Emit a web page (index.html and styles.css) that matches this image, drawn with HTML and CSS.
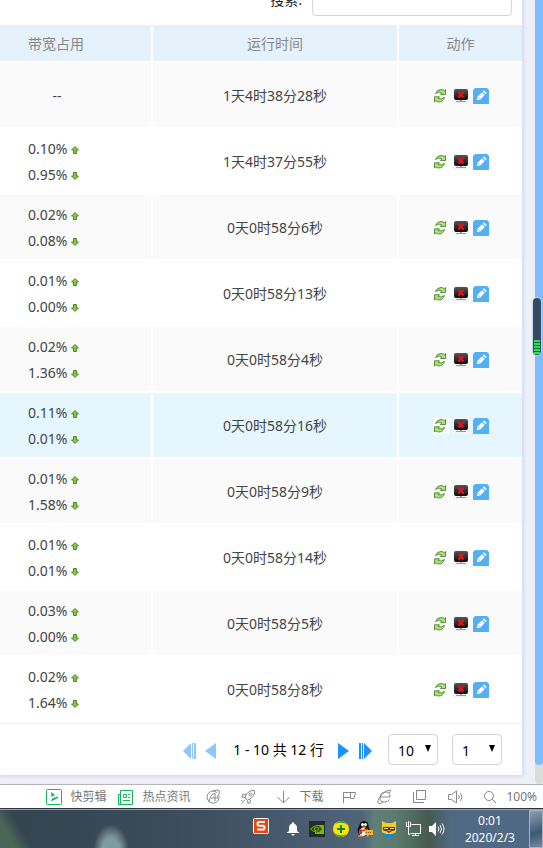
FILE: index.html
```html
<!DOCTYPE html>
<html lang="zh-CN">
  <head>
    <meta charset="utf-8" />
    <title>终端列表</title>
    <link rel="stylesheet" href="styles.css">
  </head>
  <body>
    <!-- 图标 -->
    <svg class="sprite" aria-hidden="true">
      <defs>
        <linearGradient id="screen" x1="0" y1="0" x2="0" y2="1">
          <stop offset="0" stop-color="#555" />
          <stop offset="1" stop-color="#0c0c0c" />
        </linearGradient>
        <symbol id="up" viewBox="0 0 8 8">
          <path d="M4 .5L7.5 4H5.5V7.5H2.5V4H.5Z" fill="#8cc63f" stroke="#4f8a2c" />
        </symbol>
        <symbol id="down" viewBox="0 0 8 8">
          <path d="M4 7.5L.5 4H2.5V.5H5.5V4H7.5Z" fill="#8cc63f" stroke="#4f8a2c" />
        </symbol>
        <symbol id="refresh" viewBox="0 0 16 16">
          <path d="M0 0H16V16H0Z" fill="#fff" />
          <path d="M2.500 5.500Q4 1.500 8 1.500Q10 1.500 11.200 2.700L12.500 1.500V6.500H7.500L9 5Q6 3 2.500 5.500Z" fill="#a9e57a" stroke="#4a8428" stroke-width=".9" />
          <path d="M11.500 9.500Q10 14 6 14Q4.500 14 3 12.800L1.500 14V8.800H6.500L5 10.500Q8 12 11.500 9.500Z" fill="#a9e57a" stroke="#4a8428" stroke-width=".9" />
        </symbol>
        <symbol id="offline" viewBox="0 0 16 16">
          <path d="M0 0H16V16H0Z" fill="#f5f5f5" />
          <rect x="1" y="1" width="14" height="11" rx="2" fill="url(#screen)" />
          <path d="M7 12H9V13H7ZM3 13H13V14H3Z" fill="#999" />
          <path d="M5.500 4L10.500 9.500M10.500 4L5.500 9.500" stroke="#e0131d" stroke-width="2.400" />
        </symbol>
        <symbol id="edit" viewBox="0 0 16 16">
          <path d="M2 0H14L16 2V16H0V2Z" fill="#53b0f5" />
          <path d="M4 12L4.500 8.800L9 4.300L11.700 7L7.200 11.500Z" fill="#fff" />
          <path d="M9.800 3.500L11 2.300L13.700 5L12.500 6.200Z" fill="#fff" />
          <path d="M5.500 9.500L6.500 10.500" stroke="#53b0f5" />
        </symbol>
      </defs>
    </svg>

    <main class="page">
      <section class="panel">
        <div class="search">
          <label for="keyword">搜索:</label>
          <input type="text" id="keyword">
        </div>

        <table class="list">
          <thead>
            <tr>
              <th class="col-rate">带宽占用</th>
              <th>运行时间</th>
              <th class="col-action">动作</th>
            </tr>
          </thead>
          <tbody>
            <tr>
              <td class="col-rate"><div class="rate empty">--</div></td>
              <td>1天4时38分28秒</td>
              <td>
                <div class="actions">
                  <button type="button" aria-label="刷新"><svg><use href="#refresh" /></svg></button>
                  <button type="button" aria-label="下线"><svg><use href="#offline" /></svg></button>
                  <button type="button" aria-label="编辑"><svg><use href="#edit" /></svg></button>
                </div>
              </td>
            </tr>
            <tr>
              <td class="col-rate">
                <div class="rate">0.10% <svg><use href="#up" /></svg></div>
                <div class="rate">0.95% <svg><use href="#down" /></svg></div>
              </td>
              <td>1天4时37分55秒</td>
              <td>
                <div class="actions">
                  <button type="button" aria-label="刷新"><svg><use href="#refresh" /></svg></button>
                  <button type="button" aria-label="下线"><svg><use href="#offline" /></svg></button>
                  <button type="button" aria-label="编辑"><svg><use href="#edit" /></svg></button>
                </div>
              </td>
            </tr>
            <tr>
              <td class="col-rate">
                <div class="rate">0.02% <svg><use href="#up" /></svg></div>
                <div class="rate">0.08% <svg><use href="#down" /></svg></div>
              </td>
              <td>0天0时58分6秒</td>
              <td>
                <div class="actions">
                  <button type="button" aria-label="刷新"><svg><use href="#refresh" /></svg></button>
                  <button type="button" aria-label="下线"><svg><use href="#offline" /></svg></button>
                  <button type="button" aria-label="编辑"><svg><use href="#edit" /></svg></button>
                </div>
              </td>
            </tr>
            <tr>
              <td class="col-rate">
                <div class="rate">0.01% <svg><use href="#up" /></svg></div>
                <div class="rate">0.00% <svg><use href="#down" /></svg></div>
              </td>
              <td>0天0时58分13秒</td>
              <td>
                <div class="actions">
                  <button type="button" aria-label="刷新"><svg><use href="#refresh" /></svg></button>
                  <button type="button" aria-label="下线"><svg><use href="#offline" /></svg></button>
                  <button type="button" aria-label="编辑"><svg><use href="#edit" /></svg></button>
                </div>
              </td>
            </tr>
            <tr>
              <td class="col-rate">
                <div class="rate">0.02% <svg><use href="#up" /></svg></div>
                <div class="rate">1.36% <svg><use href="#down" /></svg></div>
              </td>
              <td>0天0时58分4秒</td>
              <td>
                <div class="actions">
                  <button type="button" aria-label="刷新"><svg><use href="#refresh" /></svg></button>
                  <button type="button" aria-label="下线"><svg><use href="#offline" /></svg></button>
                  <button type="button" aria-label="编辑"><svg><use href="#edit" /></svg></button>
                </div>
              </td>
            </tr>
            <tr class="active">
              <td class="col-rate">
                <div class="rate">0.11% <svg><use href="#up" /></svg></div>
                <div class="rate">0.01% <svg><use href="#down" /></svg></div>
              </td>
              <td>0天0时58分16秒</td>
              <td>
                <div class="actions">
                  <button type="button" aria-label="刷新"><svg><use href="#refresh" /></svg></button>
                  <button type="button" aria-label="下线"><svg><use href="#offline" /></svg></button>
                  <button type="button" aria-label="编辑"><svg><use href="#edit" /></svg></button>
                </div>
              </td>
            </tr>
            <tr>
              <td class="col-rate">
                <div class="rate">0.01% <svg><use href="#up" /></svg></div>
                <div class="rate">1.58% <svg><use href="#down" /></svg></div>
              </td>
              <td>0天0时58分9秒</td>
              <td>
                <div class="actions">
                  <button type="button" aria-label="刷新"><svg><use href="#refresh" /></svg></button>
                  <button type="button" aria-label="下线"><svg><use href="#offline" /></svg></button>
                  <button type="button" aria-label="编辑"><svg><use href="#edit" /></svg></button>
                </div>
              </td>
            </tr>
            <tr>
              <td class="col-rate">
                <div class="rate">0.01% <svg><use href="#up" /></svg></div>
                <div class="rate">0.01% <svg><use href="#down" /></svg></div>
              </td>
              <td>0天0时58分14秒</td>
              <td>
                <div class="actions">
                  <button type="button" aria-label="刷新"><svg><use href="#refresh" /></svg></button>
                  <button type="button" aria-label="下线"><svg><use href="#offline" /></svg></button>
                  <button type="button" aria-label="编辑"><svg><use href="#edit" /></svg></button>
                </div>
              </td>
            </tr>
            <tr>
              <td class="col-rate">
                <div class="rate">0.03% <svg><use href="#up" /></svg></div>
                <div class="rate">0.00% <svg><use href="#down" /></svg></div>
              </td>
              <td>0天0时58分5秒</td>
              <td>
                <div class="actions">
                  <button type="button" aria-label="刷新"><svg><use href="#refresh" /></svg></button>
                  <button type="button" aria-label="下线"><svg><use href="#offline" /></svg></button>
                  <button type="button" aria-label="编辑"><svg><use href="#edit" /></svg></button>
                </div>
              </td>
            </tr>
            <tr>
              <td class="col-rate">
                <div class="rate">0.02% <svg><use href="#up" /></svg></div>
                <div class="rate">1.64% <svg><use href="#down" /></svg></div>
              </td>
              <td>0天0时58分8秒</td>
              <td>
                <div class="actions">
                  <button type="button" aria-label="刷新"><svg><use href="#refresh" /></svg></button>
                  <button type="button" aria-label="下线"><svg><use href="#offline" /></svg></button>
                  <button type="button" aria-label="编辑"><svg><use href="#edit" /></svg></button>
                </div>
              </td>
            </tr>
          </tbody>
        </table>

        <div class="pager">
          <div class="pager-btns disabled">
            <button type="button" aria-label="首页"><svg viewBox="0 0 14 16"><path d="M0 8L8 0V16ZM9 0H10V16H9ZM11 0H13V16H11Z" /></svg></button>
            <button type="button" aria-label="上一页"><svg viewBox="0 0 14 16"><path d="M0 8L11 0V16Z" /></svg></button>
          </div>
          <span class="pager-text">1 - 10 共 12 行</span>
          <div class="pager-btns">
            <button type="button" aria-label="下一页"><svg viewBox="0 0 14 16"><path d="M11 8L0 0V16Z" /></svg></button>
            <button type="button" aria-label="末页"><svg viewBox="0 0 14 16"><path d="M12 8L4 0V16ZM2 0H3V16H2ZM-1 0H1V16H-1Z" /></svg></button>
          </div>
          <div class="select">
            <select aria-label="每页行数"><option>10</option><option>20</option></select>
            <svg viewBox="0 0 8 8"><path d="M1 0H7L4 7Z" /></svg>
          </div>
          <div class="select">
            <select aria-label="页码"><option>1</option><option>2</option></select>
            <svg viewBox="0 0 8 8"><path d="M1 0H7L4 7Z" /></svg>
          </div>
        </div>
      </section>

      <div class="scrollbar"><div class="thumb"></div></div>
      <div class="gauge"><div class="gauge-level"></div></div>
    </main>

    <!-- 浏览器状态栏 -->
    <div class="statusbar">
      <div class="status-left">
        <div class="item">
          <svg class="green" viewBox="0 0 16 16"><rect x=".5" y=".5" width="15" height="15" rx="1" /><path class="fill" d="M5 3L9 6L5.500 8ZM5 12.500L6 9.500L12 7.500V9Z" /></svg>
          <span>快剪辑</span>
        </div>
        <div class="item">
          <svg class="green" viewBox="0 0 16 16"><path d="M2.500 1.500H14.500V15.500H.5V5.500H2.500M2.500 1.500V15.500M5.500 5.500H8.500V8.500H5.500ZM10 5.500H12M10 8.500H12M5 11.500H12" /></svg>
          <span>热点资讯</span>
        </div>
      </div>
      <div class="status-tools">
        <svg viewBox="0 0 16 16"><path d="M12 3.500A6 6 0 1 0 14 7M4 13Q5 6 10 4V12M6 9H13M8 2Q12 0 14.500 2Q15 5 12 8" /></svg>
        <svg viewBox="0 0 16 16"><path d="M14.500 1.500Q9 1 6 6L5 9L7.500 11L10 10Q15 7 14.500 1.500ZM6 5.500L3 5L2 8L5 8.500M10 10.500L10.500 13.500L8 14.500L7.500 11.500M4.500 11L1.500 14.500M2 11L1 12" /><circle cx="10.500" cy="5.500" r="1.500" /></svg>
        <div class="item">
          <svg viewBox="0 0 16 16"><path d="M8.500 2V14M2.500 8L8.500 14L14.500 8" /></svg>
          <span>下载</span>
        </div>
        <svg viewBox="0 0 16 16"><path d="M1.500 14V3.500H13.500L12 9.500H8.500V8.500H1.500M8.500 3.500V8.500" /></svg>
        <svg viewBox="0 0 16 16"><path d="M3 8H13Q13 3 8.500 3Q3.500 3 3 8.500Q3 13 7.500 13Q11 13 12.500 10.500M12 4Q15 1 13 1Q9 1 4.500 6Q-1 13 1.500 14.500Q3 15 6 13" /></svg>
        <svg viewBox="0 0 16 16"><path d="M4.500 1.500H13.500V10.500H4.500ZM1.500 3V13.500H12" /></svg>
        <svg viewBox="0 0 16 16"><path d="M1.500 5.500H4.500L9.500 2V14L4.500 10.500H1.500ZM11.500 6Q13 8 11.500 10M13.500 4Q16.500 8 13.500 12" /></svg>
        <div class="item">
          <svg viewBox="0 0 16 16"><circle cx="7" cy="7" r="4.500" /><path d="M10 10L14 14" /></svg>
          <span>100%</span>
        </div>
      </div>
    </div>

    <!-- 任务栏 -->
    <footer class="taskbar">
      <svg class="ime" viewBox="0 0 16 16"><rect x=".5" y=".5" width="15" height="15" rx="1" fill="#e9460f" stroke="#fff" /><path d="M12 4H6Q4.500 4 4.500 6Q4.500 7.700 6 7.700H10Q11.500 7.700 11.500 9.700Q11.500 11.500 10 11.500H4" fill="none" stroke="#fff" stroke-width="2" /></svg>
      <div class="tray">
        <svg viewBox="0 0 16 16"><path d="M8 1Q9 1 9 2.500Q12 3.500 12 7V10L14.500 12H1.500L4 10V7Q4 3.500 7 2.500Q7 1 8 1ZM6 13H10L8 15Z" fill="#fff" /></svg>
        <svg viewBox="0 0 16 16"><path d="M0 0H16V16H0Z" fill="#242b2c" /><path d="M6 4H15V13H6Z" fill="#76b900" /><path d="M1.500 8Q7 2 13 8Q7 14 1.500 8Z" fill="#314b1c" stroke="#76b900" /><path d="M6 5Q11 5 12.500 8Q10 11 7 11" fill="none" stroke="#203216" /><circle cx="7.500" cy="8" r="2" fill="none" stroke="#76b900" /></svg>
        <svg viewBox="0 0 16 16"><circle cx="8" cy="8" r="8" fill="#fbe30a" /><path d="M2 3Q6-1 11 .5Q14 2 15 4Q9 0 2 3ZM14 13Q10 17 5 15.500Q2 14 1 12Q7 16 14 13Z" fill="#35a526" /><path d="M7 4H9V7H12V9H9V12H7V9H4V7H7Z" fill="#118531" /></svg>
        <svg viewBox="0 0 16 16"><ellipse cx="6.500" cy="9" rx="6" ry="6" fill="#111" /><circle cx="7" cy="4.500" r="4.500" fill="#111" /><ellipse cx="6" cy="11" rx="3.500" ry="4" fill="#fff" /><circle cx="5.500" cy="3.500" r="1.500" fill="#fff" /><circle cx="8.500" cy="3.500" r="1.500" fill="#fff" /><path d="M4 5.500H10L7 7.500ZM1 15.500Q3 12 6 15.500Z" fill="#f5a400" /><path d="M2 8Q7 10 11 7V9Q7 11 5 10V13H3V10Z" fill="#e52222" /><path d="M8 9H16V14H12L10 16V14H8Z" fill="#f8b62d" /><path d="M9 11.500H10M11 11.500H12M13 11.500H14" stroke="#8a4c00" /></svg>
        <svg viewBox="0 0 16 16"><path d="M1 0L5 2H11L15 0V11Q12 14 8 14Q4 14 1 11Z" fill="#f9c82b" /><path d="M2 6H14V9Q12 11 8 9Q4 11 2 9Z" fill="#563b18" /><path d="M3 7.500H7M9 7.500H13" stroke="#f0d9a0" /><path d="M5 10H11L8 12Z" fill="#a33018" /><path d="M2 12L5 13H11L14 12V15L12 16H4L2 15Z" fill="#1688cc" /></svg>
        <svg viewBox="0 0 16 16"><path d="M6.500 3.500H15.500V12.500H5.500M10.500 12.500V14.500M7 14.500H14M3.500 6V13.500H5M1.500 1V5.500H5.500V1M3.500 0V5" fill="none" stroke="#fff" /></svg>
        <svg viewBox="0 0 16 16"><path d="M0 5H3L7 1V15L3 11H0Z" fill="#fff" /><path d="M9 5.500Q11 8 9 10.500M11 4Q14 8 11 12M13 2.500Q17 8 13 13.500" fill="none" stroke="#fff" /></svg>
      </div>
      <div class="clock">
        <div>0:01</div>
        <div>2020/2/3</div>
      </div>
      <button type="button" class="show-desktop" aria-label="显示桌面"></button>
    </footer>
  </body>
</html>
```
FILE: styles.css
```css
* {
  box-sizing: border-box;
}

html, body {
  height: 100%;
  margin: 0;
  overflow: hidden;
}

body {
  display: flex;
  flex-direction: column;
  font: 14px/20px "Noto Sans", "Noto Sans CJK SC", sans-serif;
  color: #444;
}

svg {
  display: block;
  width: 16px;
  height: 16px;
  flex: none;
}

button {
  display: block;
  padding: 0;
  border: none;
  background: none;
  color: inherit;
  cursor: pointer;
}

.sprite {
  position: absolute;
  width: 0;
  height: 0;
}

/* 页面区域，内容滚动到底部 */
.page {
  position: relative;
  flex: 1;
  min-height: 0;
  display: flex;
  align-items: flex-end;
  overflow: hidden;
  background-color: #eff0f6;
}

.panel {
  flex: 1;
  margin: 0 13px 9px 0;
  background-color: #fff;
  box-shadow: 0 0 4px 1px #c3d3fb;
}

.search {
  display: flex;
  justify-content: flex-end;
  align-items: center;
  gap: 10px;
  padding: 0 10px 9px;
  color: #222;
}

.search input {
  width: 200px;
  height: 32px;
  border: 1px solid #d4d4d4;
  border-radius: 4px;
}

/* 列表 */
.list {
  width: 100%;
  table-layout: fixed;
  border-collapse: separate;
  border-spacing: 0;
  text-align: center;
}

.list th,
.list td {
  height: 66px;
  padding: 2px 0 0;
  border: solid #fff;
  border-width: 0 2px 2px 0;
  background-clip: padding-box;
}

.list th {
  height: 38px;
  background-color: #e5f2fb;
  color: #888;
  font-weight: normal;
}

.list th:last-child,
.list td:last-child {
  border-right: none;
}

.list .col-rate {
  width: 153px;
  padding-left: 28px;
  text-align: left;
}

.list .col-action {
  width: 123px;
}

.list tbody tr:nth-child(odd) td {
  background-color: #fafafa;
}

.list tbody tr.active td {
  background-color: #e5f6ff;
}

.rate {
  display: flex;
  align-items: center;
  gap: 4px;
  width: 58px;
  line-height: 26px;
}

.rate.empty {
  justify-content: center;
}

.rate svg {
  width: 8px;
  height: 8px;
  margin-top: 2px;
}

.actions {
  display: flex;
  justify-content: center;
  gap: 4px;
}

/* 分页 */
.pager {
  display: flex;
  justify-content: flex-end;
  align-items: center;
  gap: 14px;
  padding: 10px 20px;
  border-top: 1px solid #f0f0f0;
  color: #000;
}

.pager-btns {
  display: flex;
  gap: 8px;
  padding-top: 2px;
  color: #1e90ff;
}

.pager-btns.disabled {
  color: #8ec6ff;
}

.pager-btns svg {
  width: 14px;
  fill: currentColor;
  overflow: visible;
}

.select {
  position: relative;
}

.select select {
  display: block;
  width: 50px;
  height: 31px;
  padding: 2px 9px 0;
  appearance: none;
  border: 1px solid #d4d4d4;
  border-radius: 4px;
  background-color: #fff;
  color: #000;
  font: inherit;
}

.select svg {
  position: absolute;
  top: 11px;
  right: 6px;
  width: 8px;
  height: 8px;
  pointer-events: none;
}

/* 滚动条 */
.scrollbar {
  align-self: stretch;
  width: 8px;
  padding-bottom: 19px;
  border-radius: 0 0 4px 4px;
  background-color: #dcdcdc;
}

.thumb {
  height: 100%;
  border-radius: 0 0 4px 4px;
  background-color: #7dbdff;
}

/* 悬浮内存条 */
.gauge {
  position: absolute;
  top: 38%;
  right: 2px;
  display: flex;
  align-items: flex-end;
  width: 8px;
  height: 57px;
  padding: 1px;
  border-radius: 4px;
  background-color: #36495f;
  box-shadow: 0 0 1px 1px #b9d9f5;
}

.gauge-level {
  width: 100%;
  height: 14px;
  background: repeating-linear-gradient(#2fe04f 0 2px, #1d5d3a 2px 3px);
}

/* 状态栏 */
.statusbar {
  display: flex;
  justify-content: flex-end;
  align-items: center;
  gap: 15px;
  height: 25px;
  padding-right: 6px;
  border-top: 1px solid #b4b5ba;
  border-bottom: 1px solid #2c3640;
  background-color: #fff;
  color: #777;
  font-size: 12px;
}

.status-left,
.status-tools,
.item {
  display: flex;
  align-items: center;
}

.status-left {
  gap: 12px;
}

.status-tools {
  gap: 19px;
}

.item {
  gap: 8px;
}

.statusbar svg {
  fill: none;
  stroke: #888;
}

.statusbar .green {
  stroke: #14b85a;
}

.statusbar .fill {
  fill: #14b85a;
  stroke: none;
}

/* 任务栏 */
.taskbar {
  display: flex;
  justify-content: flex-end;
  align-items: center;
  height: 39px;
  border-top: 1px solid #93a5b4;
  background:
    radial-gradient(ellipse 18px 28px at 111px 42px, #8199a1 50%, transparent),
    linear-gradient(60deg, #496657 14px, transparent 28px),
    linear-gradient(90deg, #33434f, #3a4b5a 30%, #4d6075 62%, #526678 67%, #5f8078 69%, #5c7a6f 73%, #465a50 79%, #526984 83%, #506883);
  color: #fff;
  font-size: 12px;
  line-height: 17px;
}

.ime {
  align-self: flex-start;
  margin: 8px 16px 0 0;
}

.tray {
  display: flex;
  gap: 8px;
}

.clock {
  padding: 0 14px 0 20px;
  text-align: center;
}

.show-desktop {
  width: 14px;
  height: 100%;
  border: 1px solid #a3b3c3;
  background: linear-gradient(160deg, #8da0b3, #3f5873 60%, #7589a0);
}
```
